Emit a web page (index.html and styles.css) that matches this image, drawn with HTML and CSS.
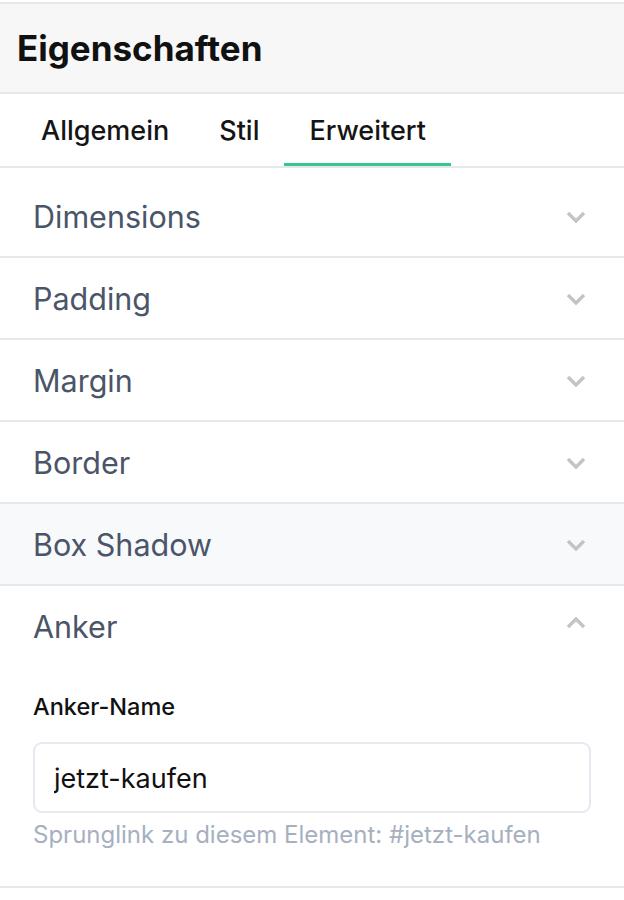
FILE: index.html
```html
<!DOCTYPE html>
<html>
<head>
  <title>Eigenschaften</title>
  <link rel="stylesheet" href="styles.css">
</head>
<body>
  <div class="panel">
    <div class="panel-header">
      <h1>Eigenschaften</h1>
    </div>

    <div class="tabs">
      <button class="tab">Allgemein</button>
      <button class="tab">Stil</button>
      <button class="tab active">Erweitert</button>
    </div>

    <div class="sections">
      <div class="section">
        <div class="section-head">
          <span>Dimensions</span>
          <svg class="chevron" viewBox="0 0 20 12"><path d="M2 2l8 8 8-8"/></svg>
        </div>
      </div>
      <div class="section">
        <div class="section-head">
          <span>Padding</span>
          <svg class="chevron" viewBox="0 0 20 12"><path d="M2 2l8 8 8-8"/></svg>
        </div>
      </div>
      <div class="section">
        <div class="section-head">
          <span>Margin</span>
          <svg class="chevron" viewBox="0 0 20 12"><path d="M2 2l8 8 8-8"/></svg>
        </div>
      </div>
      <div class="section">
        <div class="section-head">
          <span>Border</span>
          <svg class="chevron" viewBox="0 0 20 12"><path d="M2 2l8 8 8-8"/></svg>
        </div>
      </div>
      <div class="section hover">
        <div class="section-head">
          <span>Box Shadow</span>
          <svg class="chevron" viewBox="0 0 20 12"><path d="M2 2l8 8 8-8"/></svg>
        </div>
      </div>
      <div class="section open">
        <div class="section-head">
          <span>Anker</span>
          <svg class="chevron up" viewBox="0 0 20 12"><path d="M2 10l8-8 8 8"/></svg>
        </div>
        <div class="section-body">
          <label for="anchor">Anker-Name</label>
          <input type="text" id="anchor" value="jetzt-kaufen">
          <p class="hint">Sprunglink zu diesem Element: #jetzt-kaufen</p>
        </div>
      </div>
    </div>
  </div>
</body>
</html>
```

FILE: styles.css
```css
body {
  margin: 0;
  font-family: Inter, "Noto Sans", Arial, sans-serif;
  background-color: #fff;
}

.panel {
  margin-top: 2px;
  border-top: 2px solid #e5e7eb;
}

.panel-header {
  height: 88px;
  padding: 0 17px;
  display: flex;
  align-items: center;
  background-color: #f7f7f8;
  border-bottom: 2px solid #e5e7eb;
}

h1 {
  margin: 0;
  font-size: 35px;
  font-weight: 700;
  color: #111;
}

.tabs {
  display: flex;
  padding: 0 16px;
  border-bottom: 2px solid #e5e7eb;
}

.tab {
  height: 72px;
  padding: 3px 25px 0;
  border: none;
  border-bottom: 3px solid transparent;
  background: none;
  font-family: inherit;
  font-size: 27px;
  font-weight: 500;
  color: #151515;
}

.tab.active {
  border-bottom-color: #34c88f;
}

.sections {
  padding-top: 8px;
}

.section {
  border-bottom: 2px solid #e5e7eb;
}

.section.hover {
  background-color: #f8f9fb;
}

.section-head {
  height: 80px;
  padding: 0 38px 0 33px;
  display: flex;
  align-items: center;
  justify-content: space-between;
  font-size: 30.5px;
  color: #4a5568;
}

.chevron {
  width: 20px;
  height: 12px;
  margin-top: 2px;
  fill: none;
  stroke: #c4c4c4;
  stroke-width: 3.4;
}

.chevron.up {
  margin-top: -6px;
}

.section-body {
  padding: 26px 33px 37px;
}

label {
  display: block;
  margin-bottom: 21px;
  font-size: 23.5px;
  font-weight: 500;
  color: #111;
}

input[type="text"] {
  box-sizing: border-box;
  width: 100%;
  height: 71px;
  padding: 2px 19px 0;
  border: 2px solid #e5e9f0;
  border-radius: 9px;
  font-family: inherit;
  font-size: 27px;
  color: #111;
}

.hint {
  margin: 7px 0 0;
  font-size: 24px;
  color: #a6b0c0;
}
```
